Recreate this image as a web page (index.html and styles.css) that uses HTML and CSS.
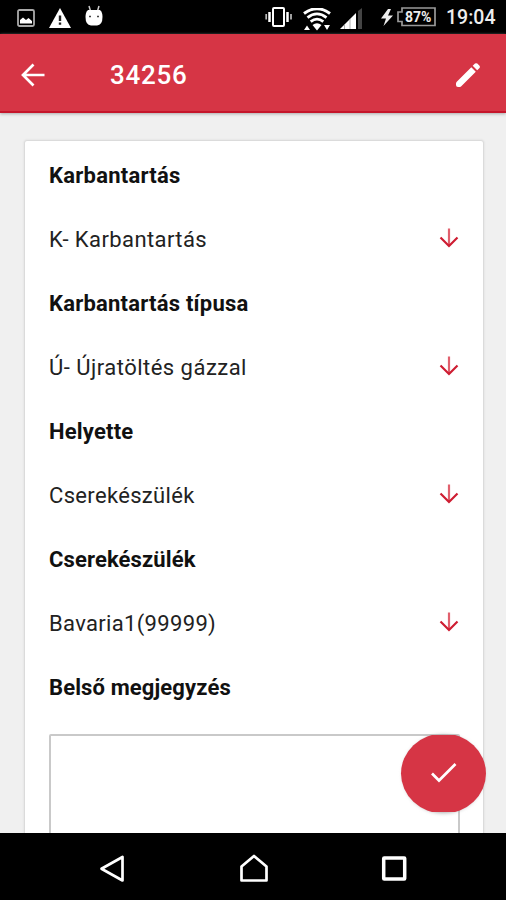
FILE: index.html
```html
<!DOCTYPE html>
<html lang="hu">
<head>
<meta charset="utf-8">
<title>34256</title>
<link rel="stylesheet" href="styles.css">
</head>
<body>
<div class="screen">
  <header class="status">
    <div class="status-left">
      <svg width="18" height="18" viewBox="0 0 18 18"><rect x="1" y="1" width="16" height="16" rx="1.5" fill="none" stroke="#aaa" stroke-width="1.8"/><path d="M3 14.500V11L6 8.500L9 11L11.500 9L15 12V14.500Z" fill="#fff"/></svg>
      <svg width="22" height="20" viewBox="0 0 22 20"><path d="M11 0L22 20H0Z" fill="#fff"/><path d="M9.800 7.500H12.200V13H9.800ZM9.800 14.500H12.200V16.700H9.800Z" fill="#222"/></svg>
      <svg width="18" height="21" viewBox="0 0 18 21"><path d="M4 1L5.500 6M14 1L12.500 6" stroke="#ccc" stroke-width="1.500"/><path d="M3 5H15Q17.500 7 17.500 12Q17.500 20 12 20.500H6Q.5 20 .5 12Q.5 7 3 5Z" fill="#fff"/><path d="M4 11.500H6M12 11.500H14" stroke="#444" stroke-width="1.500"/></svg>
    </div>
    <div class="status-right">
      <svg class="vibrate" width="28" height="20" viewBox="0 0 28 20"><rect x="8" y="1" width="11" height="18" rx="1" fill="none" stroke="#fff" stroke-width="2"/><path d="M4.500 5V15M22.500 5V15" stroke="#fff" stroke-width="2.500"/><path d="M1.200 7V12.500M26 7V12.500" stroke="#bbb" stroke-width="1.700"/></svg>
      <svg class="wifi" width="28" height="23" viewBox="0 0 28 23"><path d="M1 5.500Q14-4 27 5.500" fill="none" stroke="#fff" stroke-width="3"/><path d="M4.500 9.700Q14 2 23.500 9.700M7.700 13.700Q14 8.500 20.300 13.700" fill="none" stroke="#fff" stroke-width="2.800"/><path d="M9.500 17Q14 13.500 18.500 17L14 22.500ZM1 22L4 17.500L7 22ZM21 17H27L24 22Z" fill="#fff"/></svg>
      <svg class="signal" width="23" height="21" viewBox="0 0 23 21"><path d="M0 21L16 5V21Z" fill="#fff"/><path d="M18 3L22 0V21H18Z" fill="#444"/><path d="M4.500 16.500V21M10 11V21" stroke="#999" stroke-width=".8"/></svg>
      <svg class="bolt" width="12" height="17" viewBox="0 0 12 17"><path d="M7 0L0 9.500H5L2.500 17L12 6.500H7L10 0Z" fill="#eee"/></svg>
      <div class="battery"><svg width="39" height="20" viewBox="0 0 39 20"><path d="M5 1H38V18.500H5V14.500H1V5H5Z" fill="none" stroke="#999" stroke-width="1.700"/></svg><span class="percent">87%</span></div>
      <span class="clock">19:04</span>
    </div>
  </header>
  <nav class="appbar">
    <svg class="back" width="24" height="24" viewBox="0 0 24 24"><path d="M23.500 12H2.500M12.500 1.500L2 12L12.500 22.500" fill="none" stroke="#fff" stroke-width="2.700"/></svg>
    <h1 class="title">34256</h1>
    <svg class="edit" width="26" height="26" viewBox="0 0 26 26"><path d="M1.500 20L16.300 5.200L20.800 9.700L6 24.500Q5 25.200 3 25Q1 25 1 23Q.8 21 1.500 20ZM17.700 3.800L20 1.500Q21 .8 22.300 1.500L24.500 3.700Q25.500 5 24.500 6L22.200 8.300Z" fill="#fff"/></svg>
  </nav>
  <main class="content">
    <form class="card">
      <h2 class="label w1">Karbantartás</h2>
      <div class="select"><span class="v1">K- Karbantartás</span><svg class="down" width="20" height="20" viewBox="0 0 20 20"><path d="M10 .5V18" stroke="#e1606d" stroke-width="2.200"/><path d="M1.500 9.500L10 18L18.500 9.500" fill="none" stroke="#ce1d32" stroke-width="2.200"/></svg></div>
      <h2 class="label w2">Karbantartás típusa</h2>
      <div class="select"><span class="v2">Ú- Újratöltés gázzal</span><svg class="down" width="20" height="20" viewBox="0 0 20 20"><path d="M10 .5V18" stroke="#e1606d" stroke-width="2.200"/><path d="M1.500 9.500L10 18L18.500 9.500" fill="none" stroke="#ce1d32" stroke-width="2.200"/></svg></div>
      <h2 class="label w3">Helyette</h2>
      <div class="select"><span class="v3">Cserekészülék</span><svg class="down" width="20" height="20" viewBox="0 0 20 20"><path d="M10 .5V18" stroke="#e1606d" stroke-width="2.200"/><path d="M1.500 9.500L10 18L18.500 9.500" fill="none" stroke="#ce1d32" stroke-width="2.200"/></svg></div>
      <h2 class="label w4">Cserekészülék</h2>
      <div class="select"><span class="v4">Bavaria1(99999)</span><svg class="down" width="20" height="20" viewBox="0 0 20 20"><path d="M10 .5V18" stroke="#e1606d" stroke-width="2.200"/><path d="M1.500 9.500L10 18L18.500 9.500" fill="none" stroke="#ce1d32" stroke-width="2.200"/></svg></div>
      <h2 class="label w5">Belső megjegyzés</h2>
      <div class="note"></div>
    </form>
  </main>
  <div class="fab"><svg width="93" height="86" viewBox="0 0 93 86"><defs><clipPath id="fab-clip"><rect x="0" y="4" width="93" height="77"/></clipPath></defs><ellipse class="fab-shadow" cx="46.500" cy="43" rx="40" ry="38.500"/><ellipse cx="46.500" cy="42.500" rx="42.500" ry="40" fill="#d63545" clip-path="url(#fab-clip)"/><path d="M35 42.500L42 49.500L58.500 33" fill="none" stroke="#fff" stroke-width="2.700"/></svg></div>
  <footer class="navbar">
    <svg width="28" height="30" viewBox="0 0 28 30"><path d="M24.500 3V26.500L3.500 14.700Z" fill="none" stroke="#fff" stroke-width="2.700" stroke-linejoin="round"/></svg>
    <svg width="30" height="30" viewBox="0 0 30 30"><path d="M2.500 12.500L15 2L27.500 12.500V26.500H2.500Z" fill="none" stroke="#fff" stroke-width="2.700" stroke-linejoin="round"/></svg>
    <svg width="26" height="30" viewBox="0 0 26 30"><rect x="2.700" y="4" width="21" height="21" rx=".5" fill="none" stroke="#fff" stroke-width="3.500"/></svg>
  </footer>
</div>
</body>
</html>
```
FILE: styles.css
```css
* { box-sizing: border-box; }
body { margin: 0; font-family: Roboto, "Liberation Sans", sans-serif; }
svg { display: block; flex: none; }
.screen { position: relative; display: flex; flex-direction: column; width: 506px; height: 900px; overflow: hidden; background: #f0f0f0; }
.status { display: flex; justify-content: space-between; height: 34px; background: #000; color: #eee; }
.status-left { display: flex; align-items: flex-end; gap: 14px; height: 28px; padding-left: 17px; }
.status-left svg:first-child { margin-bottom: 1px; }
.status-left svg:last-child { margin-bottom: 2px; }
.status-right { display: flex; padding-right: 10px; }
.vibrate { margin: 7px 10px 0 0; }
.wifi { margin: 8px 9px 0 0; }
.signal { margin: 8px 18px 0 0; }
.bolt { margin: 9px 4px 0 0; }
.battery { display: grid; margin: 7px 10px 0 0; height: 20px; }
.battery > * { grid-area: 1 / 1; }
.percent { padding-left: 8px; font-size: 14px; line-height: 20px; font-weight: 700; }
.clock { width: 50px; font-size: 19.5px; font-weight: 500; line-height: 36px; white-space: nowrap; }
.appbar { display: flex; align-items: center; height: 79px; padding: 4px 25px 0 21px; background: #d63545; border-bottom: 2px solid #c5162b; box-shadow: 0 1px 3px #aaa; }
.title { margin: 0 0 0 65px; color: #fff; font-size: 26px; font-weight: 500; letter-spacing: .7px; line-height: 30px; }
.edit { margin-left: auto; }
.content { height: 720px; padding: 28px 23px 0 25px; overflow: hidden; }
.card { height: 900px; padding: 2px 24px 0 24px; background: #fff; border-radius: 2px; box-shadow: 0 0 2px 1px #d4d4d4; }
.label, .select { height: 64px; margin: 0; font-size: 22px; line-height: 65px; white-space: nowrap; }
.label { color: #111; font-weight: 700; }
.select { display: flex; justify-content: space-between; align-items: center; color: #222; }
.w1 { letter-spacing: .25px; }
.w2 { letter-spacing: .22px; }
.w3 { letter-spacing: .2px; }
.w4, .w5 { letter-spacing: .12px; }
.v1 { letter-spacing: .4px; }
.v2 { letter-spacing: .48px; }
.v3, .v4 { letter-spacing: .33px; }
.down { margin-bottom: 2px; }
.note { width: 411px; height: 200px; margin-top: 15px; border: 2px solid #c9c9c9; border-radius: 2px; }
.fab { position: absolute; left: 397px; top: 731px; }
.fab-shadow { fill: #999; filter: blur(2px); }
.navbar { position: relative; display: flex; justify-content: space-between; align-items: center; height: 67px; padding: 4px 99px 0 98px; background: #000; }
```
